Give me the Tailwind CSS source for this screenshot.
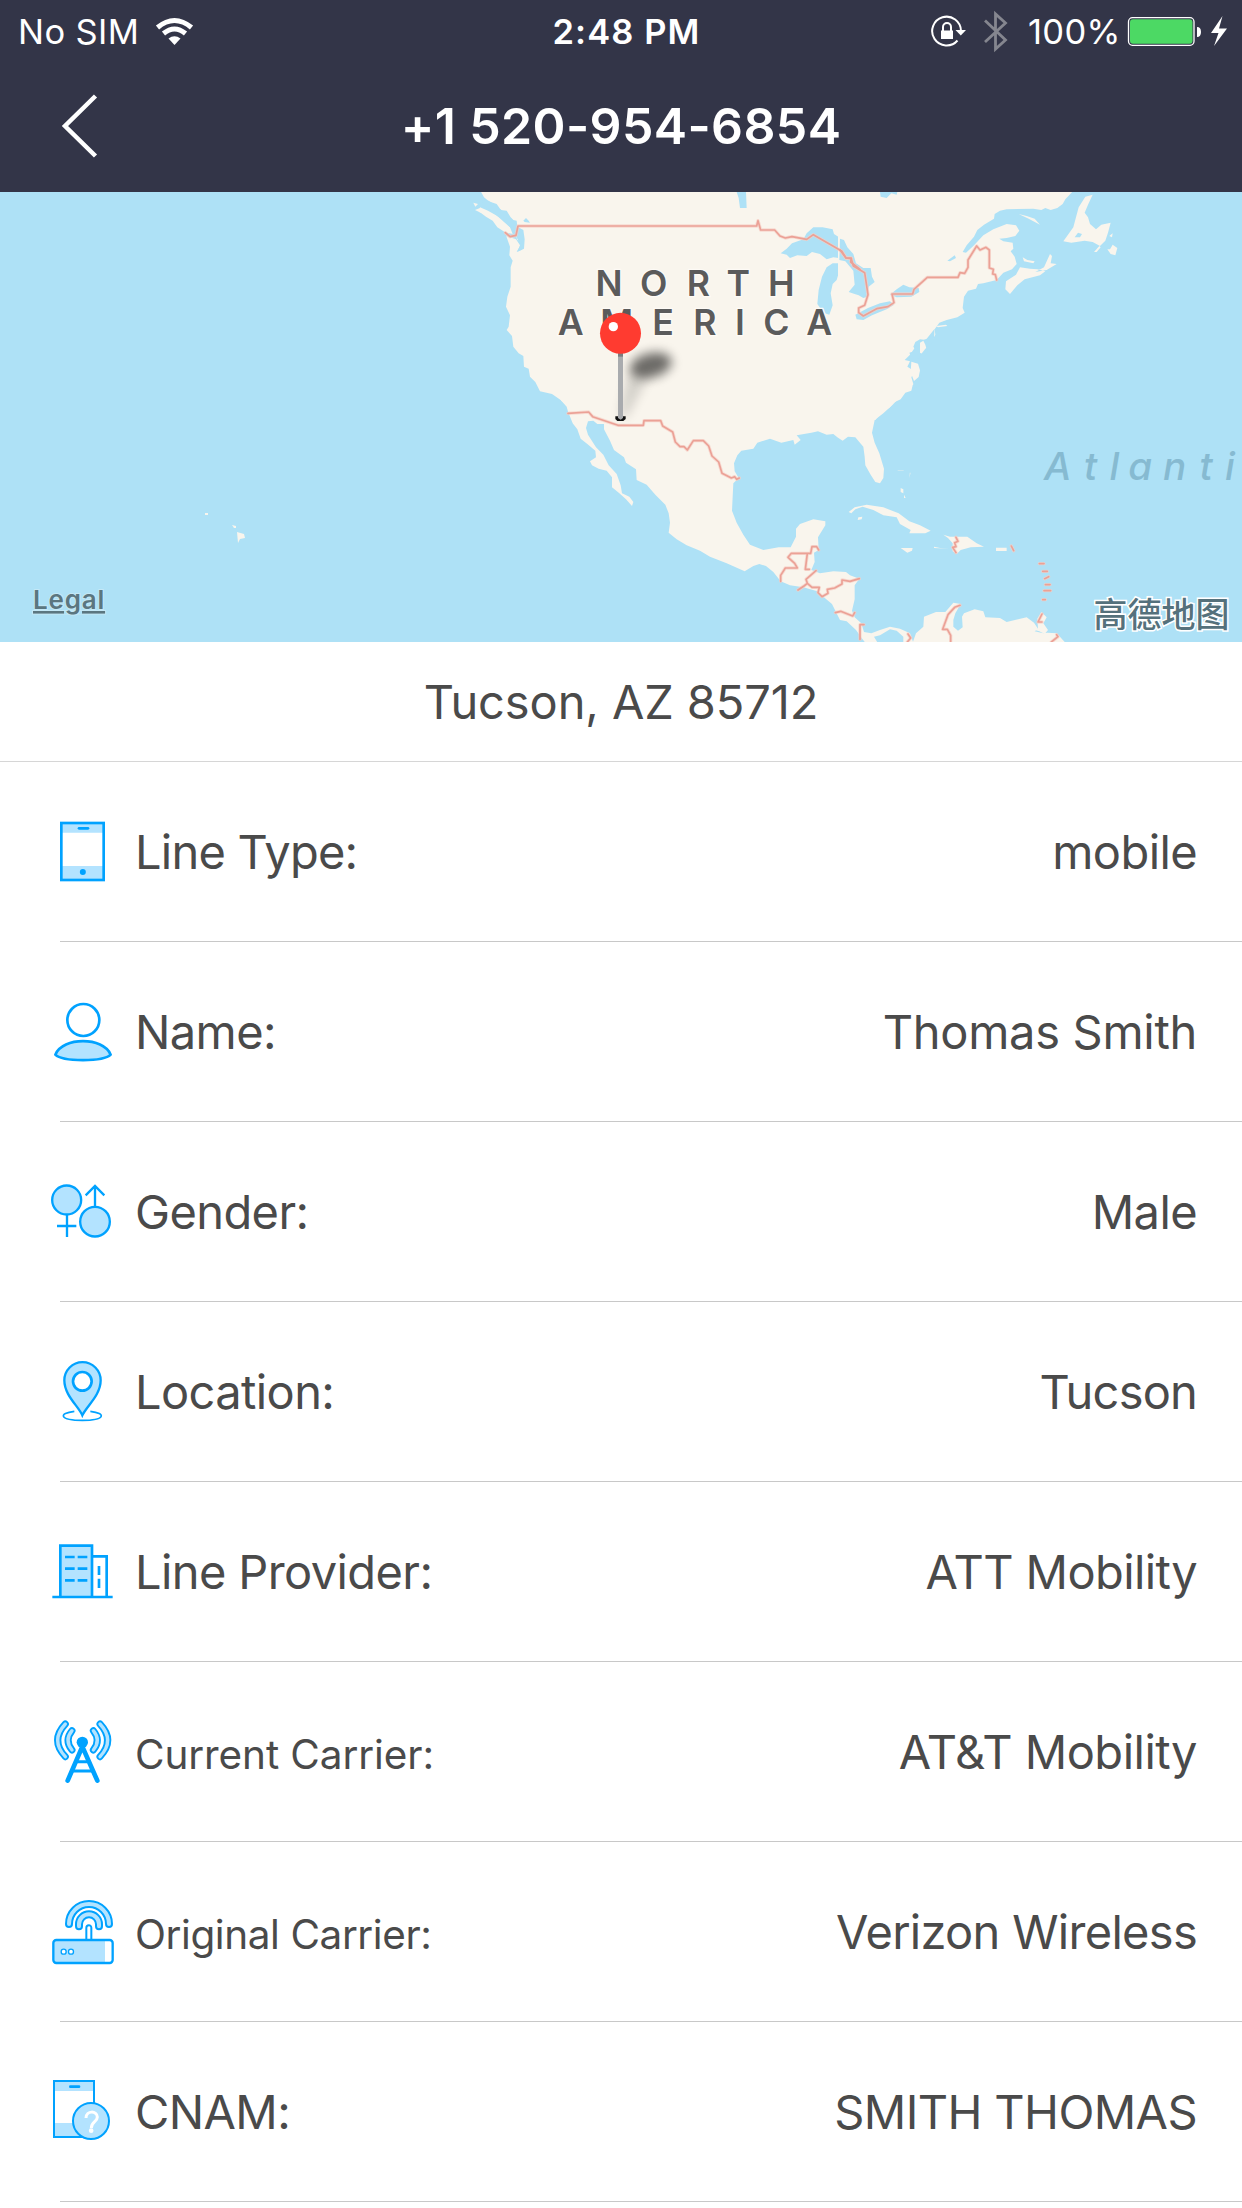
<!DOCTYPE html>
<html lang="en">
<head>
<meta charset="utf-8">
<title>+1 520-954-6854</title>
<script src="https://cdn.jsdelivr.net/npm/@tailwindcss/browser@4"></script>
</head>
<body class="w-[1242px] h-[2208px] overflow-hidden bg-white font-['Inter',sans-serif] text-[#4a4a4a]">
<header class="h-[192px] bg-[#333548] text-white">
  <div class="grid h-[63px] grid-cols-3 items-center text-[34.5px]">
    <div class="flex items-center pl-[18px]">
      <span class="w-[136px] whitespace-nowrap tracking-[0.4px]">No SIM</span>
      <svg class="h-[30px] w-[40px]" viewBox="154 15 40 30" fill="none" stroke="#fff" stroke-width="5">
        <path d="M157.500 25.500Q174.500 11.500 191.500 25.500M163.500 31.500Q174.500 22.500 185.500 31.500"/>
        <path d="M168.500 36.500Q174.500 32 180.500 36.500L174.500 43Z" fill="#fff" stroke="none"/>
      </svg>
    </div>
    <div class="text-center pl-[11px] font-semibold whitespace-nowrap tracking-[1.1px]">2:48 PM</div>
    <div class="flex items-center justify-end pr-[14px]">
      <svg class="h-[44px] w-[80px]" viewBox="930 9 80 44" fill="none">
        <path d="M961 30A14.400 14.400 0 1 0 957.500 39.500" stroke="#fff" stroke-width="2"/>
        <path d="M955.500 29h10.500l-5.200 5.500z" fill="#fff"/>
        <path d="M941 29.500h12v8.500h-12z" fill="#fff"/>
        <path d="M943 30v-4a4 4 0 0 1 8 0v4" stroke="#fff" stroke-width="2"/>
        <path d="M985 19.500L1005.500 39L995.500 48V13L1005.500 22L985 41" stroke="#85868f" stroke-width="2.800"/>
      </svg>
      <span class="w-[109px] pl-[18px] whitespace-nowrap tracking-[0.3px]">100%</span>
      <svg class="ml-[8px] h-[32px] w-[101px]" viewBox="1127 15 101 32">
        <rect x="1128.500" y="16.700" width="65.500" height="27.600" rx="4" fill="none" stroke="#fff" stroke-width="1.300"/>
        <rect x="1130" y="18.200" width="62.500" height="24.600" rx="3" fill="#4cd964"/>
        <path d="M1197 26q4 0 4 5t-4 5z" fill="#fff"/>
        <path d="M1222.500 15l-11.500 17h7.500l-4.500 13 13-17.500h-8z" fill="#fff"/>
      </svg>
    </div>
  </div>
  <div class="grid h-[129px] grid-cols-[200px_1fr_200px] items-center pb-[3px]">
    <svg class="ml-[60px] h-[66px] w-[40px]" viewBox="60 92 40 66" fill="none" stroke="#fff" stroke-width="4.500"><path d="M95.500 95L65 125L95.500 155"/></svg>
    <h1 class="text-center text-[50px] font-semibold whitespace-nowrap tracking-[0.38px]">+1 520-954-6854</h1>
  </div>
</header>

<section class="h-[450px]">
<svg class="block h-[450px] w-[1242px]" viewBox="0 192 1242 450">
  <defs><filter id="soft" x="-50%" y="-80%" width="200%" height="260%"><feGaussianBlur stdDeviation="16"/></filter></defs>
  <rect y="192" width="1242" height="450" fill="#aee1f6"/>
  <!-- Western and central states -->
  <g transform="translate(460 180) scale(.33333)">
    <path fill="#f9f5ed" d="M60 30L72 52L82 60L92 66L110 72L120 86L135 100L150 112L162 124L172 140L168 168L172 180L184 184L190 205L172 216L180 196L168 178L150 172L140 168L134 156L112 142L98 122L78 110L62 98L45 90L60 84L90 106L116 120L136 144L140 172L150 200L148 226L158 242L152 262L152 320L142 350L138 380L150 406L146 440L140 450L156 468L160 500L176 520L190 528L192 560L206 566L210 590L226 606L240 634L276 642L302 660L320 680L326 702L1202 702V30Z"/>
    <path fill="#f9f5ed" d="M40 68l14 4l-8 8zM60 82l24 10l24 14l22 14l20 22l8 20l-18-4l-20-16l-18-22l-22-14l-22-10z"/>
    <path fill="#aee1f6" d="M66 60L92 66L122 90L140 92L152 112L160 120L170 122L172 140L190 150L194 178L192 206L180 212L170 215L182 195L172 176L160 150L132 126L112 108L90 90L70 78zM190 122l8-8l8 8l4 6l-16-2zM830 36h28l2 48h-20l-4-30zM962 220L980 206L996 190L1030 178L1040 160L1060 142L1088 142L1118 148L1122 162L1150 180L1156 204L1168 226L1152 236L1120 232L1100 238L1080 222L1056 216L1040 228L1012 226L990 234L980 224zM1118 250L1140 250L1152 262L1136 280L1130 300L1118 312L1112 340L1118 376L1108 404L1090 398L1072 372L1076 330L1086 290L1100 262zM1150 240L1185 250L1200 262V340L1184 325L1192 295L1172 268L1150 262z"/>
  </g>
  <!-- Eastern Canada and the Atlantic seaboard -->
  <g transform="translate(840 180) scale(.33333)">
    <path fill="#f9f5ed" d="M-6 30H702L676 58L668 72L652 84L632 90L616 84L604 90L580 86L500 88L480 92L464 102L462 116L432 134L412 150L402 170L380 196L368 216L378 218L400 198L430 166L460 148L500 132L528 136L538 152L526 168L500 174L478 176L490 184L518 188L520 206L512 214L524 230L530 252L516 268L490 278L470 300L430 310L414 312L408 326L384 332L372 350L368 384L374 398L352 412L320 420L298 428L284 448L286 464L270 492L258 480L240 478L226 486L220 500L228 512L208 518L218 540L214 560L238 572L234 598L218 616L214 632L196 638L182 658L160 668L150 682L120 702L106 720H-6Z"/>
    <path fill="#f9f5ed" d="M758 44l-22 6l-20 32l-16 60l-16 22l-14 20l24 4l40-6l24 4l22 12l16-16l8-24l8-30l-28 6l-16 14l-18-16l-6-20l-10-14l10-24zM536 102l30 14l34 18l-16-18l-24-8zM540 262l-12 22l-30 20l-2 24l14 14l22-26l22-18l46-12l16-12l-24-6l-22-2zM612 262l18-40l6 6l-4 22l18 2l-30 18l-34 6zM548 232l14 8l22 4l-4 6l-28-6zM802 208l10 14l14 4l6-22l-14-10l-8 14zM762 216l16-18l4 4l-12 14zM808 168l10-8l-2 12zM288 438l30-4l4 4l-28 4z"/>
    <path fill="#aee1f6" d="M120 36h52l-2 8l-16-4l-14 14l-18-4zM704 172l10-14l12 4l-6 10zM0 176l12 4l10 22l18 20l8 28l22 14h22l4 26l8 16l-18 14l-4 30l-12 4l-14-8l-12-4l-18-6l18-22l-4-42l-24-28l-18-4zM46 404L84 384L120 370L150 364L162 374L140 388L96 406L70 420L50 418zM150 344L170 328L190 314L208 322L236 324L238 336L214 350L170 352zM322 242l22-16l4 8l-18 10zM236 486l24-10l24-30l-2 28l-12 26l-12-2l4 20l-12 6l-8-12l-4 26l-8-6v24l6 18l6 26l-8 18l-8 14l-12-40l10-18l-22-14l8-16l-16-4l16-16z"/>
    <path fill="#f9f5ed" d="M240 488l10-6l6 12l5 18l-9 12l-12-6zM214 545l20 6l6 20l-4 20l-14 12l-10-26z"/>
    <path fill="#aee1f6" d="M264 500l-4 26l-18 14l-2 20l6 30l-4 26l-22 12l24-30l-2-30l-6-24l6-20l14-18z"/>
  </g>
  <!-- Mexico, the Gulf and Central America -->
  <g transform="translate(540 400) scale(.33333)" fill="#f9f5ed">
    <path d="M50-20L64 2L82 16L86 40L98 70L112 88L122 116L142 132L166 152L168 172L150 184L156 196L176 206L200 212L216 232L216 262L238 280L258 298L276 318L280 306L268 290L246 280L242 256L230 222L206 196L190 164L168 142L144 104L138 84L144 64L160 62L172 72L192 72L192 88L210 122L222 150L252 172L258 188L288 208L290 240L320 254L346 284L376 314L386 340L390 368L386 398L410 418L440 436L480 452L510 470L560 490L614 514L640 498L658 492L678 498L700 516L722 544L750 556L790 562L832 574L850 590L876 612L888 636L900 660L920 664L948 690L965 714L985 740H1020L1002 710L1020 706L1050 688L1070 692L1090 710V728H1120L1110 700L1080 686L1050 680L1020 690L994 700L972 696L964 670L944 652L936 632L944 598V556L958 536L930 526L918 516L880 514L840 520L814 510L824 486L822 458L836 450L834 412L856 376L856 364L820 358L780 372L768 386L768 410L752 442L716 442L670 450L630 434L610 404L590 368L576 332L580 250L596 234L584 214L582 190L592 166L604 152L640 146L652 128L690 116L724 128L760 120L764 134L782 120L770 106L814 98L834 94L860 104L880 102L892 112L908 122L924 110L946 112L956 124L970 140L974 170L976 196L992 224L1006 246L1020 250L1030 234L1032 206L1018 160L1004 128L996 98L1004 60L1030 40L1058 14L1090-20Z"/>
  </g>
  <!-- Caribbean islands and South America -->
  <g transform="translate(840 400) scale(.33333)" fill="#f9f5ed">
    <path d="M26 336L44 322L80 314L130 322L176 340L208 364L240 376L272 392L256 400L208 400L212 390L180 372L170 352L130 346L100 330L68 320L46 328L34 340zM182 444h36l-2 8l-14 6zM310 404l20 6h52l28 20l22 10l-40 2l-30 8l-12 12l-12-8v-24l-14-16zM282 440l18 4l28 2l-46-2zM468 443h32v10h-32zM182 264l8 4v12l-8-4zM192 284l5 10h-5zM55 352l12-2l-2 8l-12 2zM570 686h24l-2-30l12-20l16 16l-10 18l14 20l-10 12l-16-8z"/>
    <path opacity=".5" d="M173 211h18v2h-18zM209 218l4 0l-6 16z"/>
    <path d="M218 728L228 700L250 680L252 650L288 636L316 636L340 608L362 612L346 640L340 660V680L354 692L368 682L366 650L372 640L404 628L430 634L436 652L480 654L500 666L560 652L582 668L594 686L584 694L610 700L622 698L650 700L676 728Z"/>
  </g>
  <!-- Hawaii -->
  <path fill="#f9f5ed" d="M237 532l7 2l1 4l-5 1l-2 4zM205 513h3v2h-3zM232 525l4 1v2h-2z"/>
  <!-- Country borders -->
  <defs>
    <g id="borders">
      <path transform="translate(460 180) scale(.33333)" d="M136 158L150 170L168 166L174 138H890L894 122L902 150H944L960 168L976 174L996 170L1040 178L1060 164L1146 214L1158 234L1174 234L1172 246L1200 268"/>
      <path transform="translate(840 180) scale(.33333)" d="M0 210L18 234L34 236L40 258L74 278L84 344L74 376L56 384V398L70 408L110 386L144 380L162 368L156 342H218L222 328L262 292H354L360 278L374 280L384 262V240L410 198L420 210L438 202L448 210V264L460 268L458 282L466 284L470 300"/>
      <path transform="translate(540 400) scale(.33333)" d="M84 40L146 36L158 50L234 76H310L312 62H362L368 78L398 96L406 126L420 140H432L442 150L460 122H490L506 138L516 168L536 186L546 220L574 234L584 230L590 238L598 234M722 544V526L736 504H772L764 490L744 472L754 460H812L816 440H830L836 450M802 460L796 508H808M828 512L798 538L802 550L792 558L774 570M802 550L816 562H838L834 578L846 590L864 580L862 568L884 564L906 552V540L930 544L958 536M886 638L902 634L938 648L944 638M972 674H960V718"/>
      <path transform="translate(840 400) scale(.33333)" d="M360 616L344 622L324 644L308 688H322L332 706V726M204 702l8 12l-10 12M348 412l6 12l-10 4l4 12l-10 2l10 16M514 438l7 14M598 491h14M608 514h14M614 536l12-6M616 554h14M612 572h20M608 599h8M606 642l-12 24h12M634 726l20-16l-4-6"/>
    </g>
  </defs>
  <g fill="none" stroke-linejoin="round" stroke-linecap="round">
    <use href="#borders" stroke="#f6cfc5" stroke-width="10" stroke-opacity=".7"/>
    <use href="#borders" stroke="#eba196" stroke-width="5"/>
  </g>
  <g transform="translate(460 180) scale(.33333)" font-family="Inter,sans-serif" font-weight="600" font-size="107" fill="#5b5b5b" text-anchor="middle" stroke="#fdfaf5" stroke-width="8" paint-order="stroke">
    <text y="349" x="447 581 715 835 964">NORTH</text>
    <text y="465" x="332 470 609 735 840 949 1078">AMERICA</text>
  </g>
  <text transform="translate(840 400) scale(.33333)" font-family="Inter,sans-serif" font-weight="500" font-style="italic" font-size="116" fill="#86bad1" text-anchor="middle" y="240" x="653 752 823 901 1004 1098 1170">Atlanti</text>
  <!-- Map pin -->
  <g transform="translate(460 180) scale(.33333)">
    <path filter="url(#soft)" fill="#000" opacity=".15" d="M478 710L505 580L570 580L500 710z"/>
    <ellipse filter="url(#soft)" cx="572" cy="556" rx="64" ry="36" transform="rotate(-14 572 556)" opacity=".56"/>
    <path d="M466 709h31v8l-7 6h-18l-6-6z" fill="#111"/>
    <path d="M474 510h15v204l-7 5l-8-5z" fill="#a9abae"/>
    <path d="M474 515h15v15h-15z" fill="#7b7d80"/>
    <circle cx="481.500" cy="460" r="61.500" fill="#ff3b30"/>
    <circle cx="460" cy="440" r="14" fill="#fff"/>
  </g>
  <text x="33" y="609" font-family="Inter,sans-serif" font-weight="600" font-size="26" letter-spacing=".8" fill="#5b7680" stroke="#c4e8f6" stroke-width="2" paint-order="stroke" class="underline decoration-2 underline-offset-[3px]">Legal</text>
  <text x="1093.500" y="627" font-family="'Noto Sans CJK SC',sans-serif" font-weight="500" font-size="34" fill="#55717c" stroke="#fff" stroke-width="3" paint-order="stroke">高德地图</text>
</svg>
</section>

<div class="flex h-[120px] items-center justify-center border-b border-[#d6d6d6] pt-[2px] text-[47px] whitespace-nowrap tracking-[-0.1px]">Tucson, AZ 85712</div>

<main class="text-[47px] leading-none tracking-[-0.6px] whitespace-nowrap">
  <div class="flex h-[179px] items-center pr-[45px] pl-[45px]">
    <svg class="h-[79px] w-[80px]" viewBox="45 36 240 237" fill="none" stroke="#00a2ff" stroke-width="8">
      <path d="M94 70h128v28h-128zM94 198h128v42h-128z" fill="#b3e3ff" stroke="none"/><rect x="94" y="69" width="127" height="171"/><path d="M147 85h27" stroke-linecap="round"/><circle cx="158.500" cy="216" r="9" fill="#00a2ff" stroke="none"/>
    </svg>
    <span class="ml-[10px] flex-1 tracking-[-0.75px]">Line Type:</span><span>mobile</span>
  </div>
  <div class="ml-[60px] h-px bg-[#c8c8c8]"></div>

  <div class="flex h-[179px] items-center pr-[45px] pl-[45px]">
    <svg class="h-[79px] w-[80px]" viewBox="45 576 240 237" fill="none" stroke="#00a2ff" stroke-width="8">
      <circle cx="160" cy="660" r="48"/><path d="M76 764C98 710 220 710 242 764C220 786 98 786 76 764Z" fill="#b3e3ff" stroke-linejoin="round"/>
    </svg>
    <span class="ml-[10px] flex-1">Name:</span><span class="tracking-[-0.3px]">Thomas Smith</span>
  </div>
  <div class="ml-[60px] h-px bg-[#c8c8c8]"></div>

  <div class="flex h-[179px] items-center pr-[45px] pl-[45px]">
    <svg class="h-[79px] w-[80px]" viewBox="45 36 240 237" fill="none" stroke="#00a2ff" stroke-width="7">
      <circle cx="110" cy="120" r="43.500" fill="#b3e3ff"/><circle cx="195" cy="185" r="44.500" fill="#b3e3ff"/><path d="M111 164v67M81 198h58M195 140V80M167 106l28-28l28 28"/>
    </svg>
    <span class="ml-[10px] flex-1">Gender:</span><span>Male</span>
  </div>
  <div class="ml-[60px] h-px bg-[#c8c8c8]"></div>

  <div class="flex h-[179px] items-center pr-[45px] pl-[45px]">
    <svg class="h-[79px] w-[80px]" viewBox="45 576 240 237" fill="none" stroke="#00a2ff" stroke-width="7">
      <path d="M157 766C145 738 103 706 103 661a54.500 54.500 0 0 1 109 0C212 706 170 738 157 766Z" fill="#b3e3ff"/><circle cx="157" cy="664" r="28" fill="#fff" stroke-width="8"/><path d="M133 754C84 760 88 781 157 781S230 760 181 754" stroke-width="5"/>
    </svg>
    <span class="ml-[10px] flex-1">Location:</span><span class="tracking-[-0.8px]">Tucson</span>
  </div>
  <div class="ml-[60px] h-px bg-[#c8c8c8]"></div>

  <div class="flex h-[179px] items-center pr-[45px] pl-[45px]">
    <svg class="h-[79px] w-[80px]" viewBox="45 36 240 237" fill="none" stroke="#00a2ff" stroke-width="8">
      <path d="M91 230V77h95v153" fill="#b3e3ff"/><path d="M186 109h44v121M67 231h181M105 111h29M143 111h29M105 146h29M143 146h29M105 181h29M143 181h29M207 138v27M207 176v28"/>
    </svg>
    <span class="ml-[10px] flex-1">Line Provider:</span><span>ATT Mobility</span>
  </div>
  <div class="ml-[60px] h-px bg-[#c8c8c8]"></div>

  <div class="flex h-[179px] items-center pr-[45px] pl-[45px]">
    <svg class="h-[79px] w-[80px]" viewBox="45 576 240 237" fill="none" stroke-linecap="round">
      <g stroke="#00a2ff" stroke-width="21"><path d="M106 612Q60 661 106 710M126 632Q102 661 126 690M210 612Q256 661 210 710M190 632Q214 661 190 690"/></g>
      <g stroke="#b3e3ff" stroke-width="10"><path d="M106 612Q60 661 106 710M126 632Q102 661 126 690M210 612Q256 661 210 710M190 632Q214 661 190 690"/></g>
      <circle cx="157" cy="667" r="17" fill="#00a2ff"/><path d="M113 782L157 680L202 782" stroke="#00a2ff" stroke-width="14"/><path d="M143 725h28M131 753h54" stroke="#00a2ff" stroke-width="9"/>
    </svg>
    <span class="ml-[10px] flex-1 pt-[7px] text-[40.5px] tracking-[-0.1px]">Current Carrier:</span><span class="tracking-[-0.5px]">AT&amp;T Mobility</span>
  </div>
  <div class="ml-[60px] h-px bg-[#c8c8c8]"></div>

  <div class="flex h-[179px] items-center pr-[45px] pl-[45px]">
    <svg class="h-[79px] w-[80px]" viewBox="45 36 240 237" fill="none" stroke-linecap="round">
      <path d="M117 132a60 60 0 0 1 120 0M147 139v-6a30 30 0 0 1 60 0v6" stroke="#00a2ff" stroke-width="24"/>
      <path d="M117 132a60 60 0 0 1 120 0M147 139v-6a30 30 0 0 1 60 0v6" stroke="#b3e3ff" stroke-width="12"/>
      <path d="M169 179v-36a7.500 7.500 0 0 1 15 0v36" fill="#fff" stroke="#00a2ff" stroke-width="6"/>
      <rect x="70" y="180" width="178" height="69" rx="9" fill="#fff"/><path d="M72 182h153v66H72z" fill="#b3e3ff"/>
      <rect x="70" y="180" width="178" height="69" rx="9" stroke="#00a2ff" stroke-width="7"/>
      <circle cx="101" cy="215" r="7.500" fill="#fff" stroke="#00a2ff" stroke-width="4"/><circle cx="123" cy="215" r="7.500" fill="#fff" stroke="#00a2ff" stroke-width="4"/>
    </svg>
    <span class="ml-[10px] flex-1 pt-[7px] text-[40.5px] tracking-[-0.42px]">Original Carrier:</span><span class="tracking-[-0.7px]">Verizon Wireless</span>
  </div>
  <div class="ml-[60px] h-px bg-[#c8c8c8]"></div>

  <div class="flex h-[179px] items-center pr-[45px] pl-[45px]">
    <svg class="h-[79px] w-[80px]" viewBox="45 576 240 237" fill="none" stroke="#00a2ff" stroke-width="6">
      <path d="M72 604h120v29H72zM72 729h120v42H72z" fill="#b3e3ff" stroke="none"/><rect x="72" y="603" width="120" height="168"/><path d="M121 620h26" stroke-width="8" stroke-linecap="round"/>
      <circle cx="183" cy="723" r="54" fill="#b3e3ff"/><path d="M168 714c0-24 34-22 34-3c0 15-18 13-18 33" stroke="#fff" stroke-width="9"/><circle cx="183.500" cy="752" r="7" fill="#fff" stroke="none"/>
    </svg>
    <span class="ml-[10px] flex-1">CNAM:</span><span>SMITH THOMAS</span>
  </div>
  <div class="ml-[60px] h-px bg-[#c8c8c8]"></div>
</main>
</body>
</html>
